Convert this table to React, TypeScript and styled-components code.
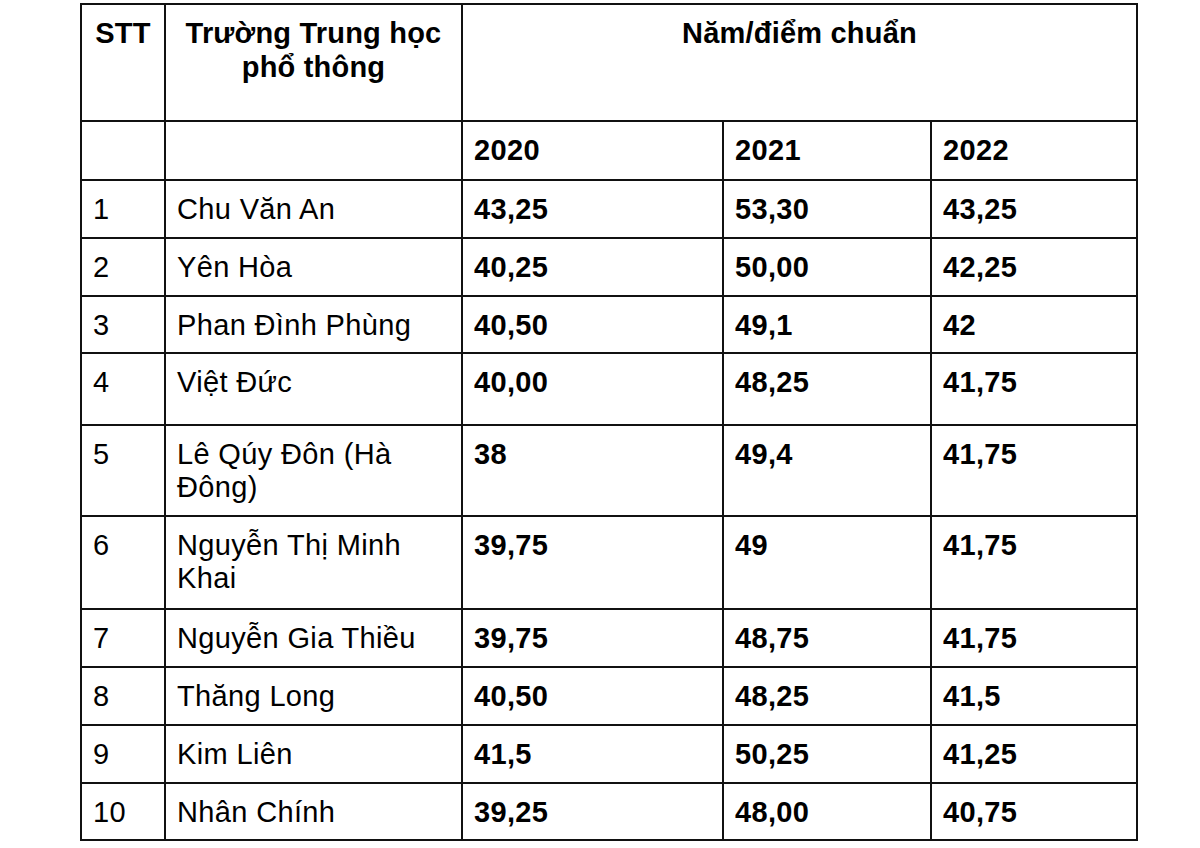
import React from 'react'
import styled, { createGlobalStyle } from 'styled-components'

const GlobalStyle = createGlobalStyle`
  html, body {
    margin: 0;
    padding: 0;
    background: #fff;
  }
  body {
    font-family: "Liberation Sans", Arial, sans-serif;
    color: #000;
  }
`

const Page = styled.div`
  padding: 3px 0 0 80px;
  width: 1200px;
  height: 848px;
  box-sizing: border-box;
  overflow: hidden;
`

const Table = styled.table`
  width: 1058px;
  table-layout: fixed;
  border-collapse: collapse;
  border: 2px solid #111;
`

const Row = styled.tr<{ $h: number }>`
  height: ${({ $h }) => $h}px;
`

const Cell = styled.td<{ $bold?: boolean; $center?: boolean }>`
  border: 2px solid #111;
  padding: 12px 11px 0 11px;
  vertical-align: top;
  text-align: ${({ $center }) => ($center ? 'center' : 'left')};
  font-size: 29px;
  line-height: 33px;
  font-weight: ${({ $bold }) => ($bold ? 700 : 400)};
  letter-spacing: 0.35px;
`

const HeadCell = styled(Cell)`
  padding-top: 11px;
  line-height: 34px;
  letter-spacing: 0.2px;
`

type School = {
  stt: string
  name: string
  scores: [string, string, string]
  h: number
}

const schools: School[] = [
  { stt: '1', name: 'Chu Văn An', scores: ['43,25', '53,30', '43,25'], h: 58 },
  { stt: '2', name: 'Yên Hòa', scores: ['40,25', '50,00', '42,25'], h: 58 },
  { stt: '3', name: 'Phan Đình Phùng', scores: ['40,50', '49,1', '42'], h: 57 },
  { stt: '4', name: 'Việt Đức', scores: ['40,00', '48,25', '41,75'], h: 72 },
  { stt: '5', name: 'Lê Qúy Đôn (Hà Đông)', scores: ['38', '49,4', '41,75'], h: 91 },
  { stt: '6', name: 'Nguyễn Thị Minh Khai', scores: ['39,75', '49', '41,75'], h: 93 },
  { stt: '7', name: 'Nguyễn Gia Thiều', scores: ['39,75', '48,75', '41,75'], h: 58 },
  { stt: '8', name: 'Thăng Long', scores: ['40,50', '48,25', '41,5'], h: 58 },
  { stt: '9', name: 'Kim Liên', scores: ['41,5', '50,25', '41,25'], h: 58 },
  { stt: '10', name: 'Nhân Chính', scores: ['39,25', '48,00', '40,75'], h: 57 },
]

export default function App() {
  return (
    <Page>
      <GlobalStyle />
      <Table>
        <colgroup>
          <col style={{ width: 84 }} />
          <col style={{ width: 297 }} />
          <col style={{ width: 261 }} />
          <col style={{ width: 208 }} />
          <col style={{ width: 206 }} />
        </colgroup>
        <tbody>
          <Row $h={117}>
            <HeadCell $bold $center>STT</HeadCell>
            <HeadCell $bold $center>Trường Trung học phổ thông</HeadCell>
            <HeadCell $bold $center colSpan={3}>Năm/điểm chuẩn</HeadCell>
          </Row>
          <Row $h={59}>
            <Cell />
            <Cell />
            <Cell $bold>2020</Cell>
            <Cell $bold>2021</Cell>
            <Cell $bold>2022</Cell>
          </Row>
          {schools.map((s) => (
            <Row key={s.stt} $h={s.h}>
              <Cell>{s.stt}</Cell>
              <Cell>{s.name}</Cell>
              {s.scores.map((v, i) => (
                <Cell key={i} $bold>{v}</Cell>
              ))}
            </Row>
          ))}
        </tbody>
      </Table>
    </Page>
  )
}
